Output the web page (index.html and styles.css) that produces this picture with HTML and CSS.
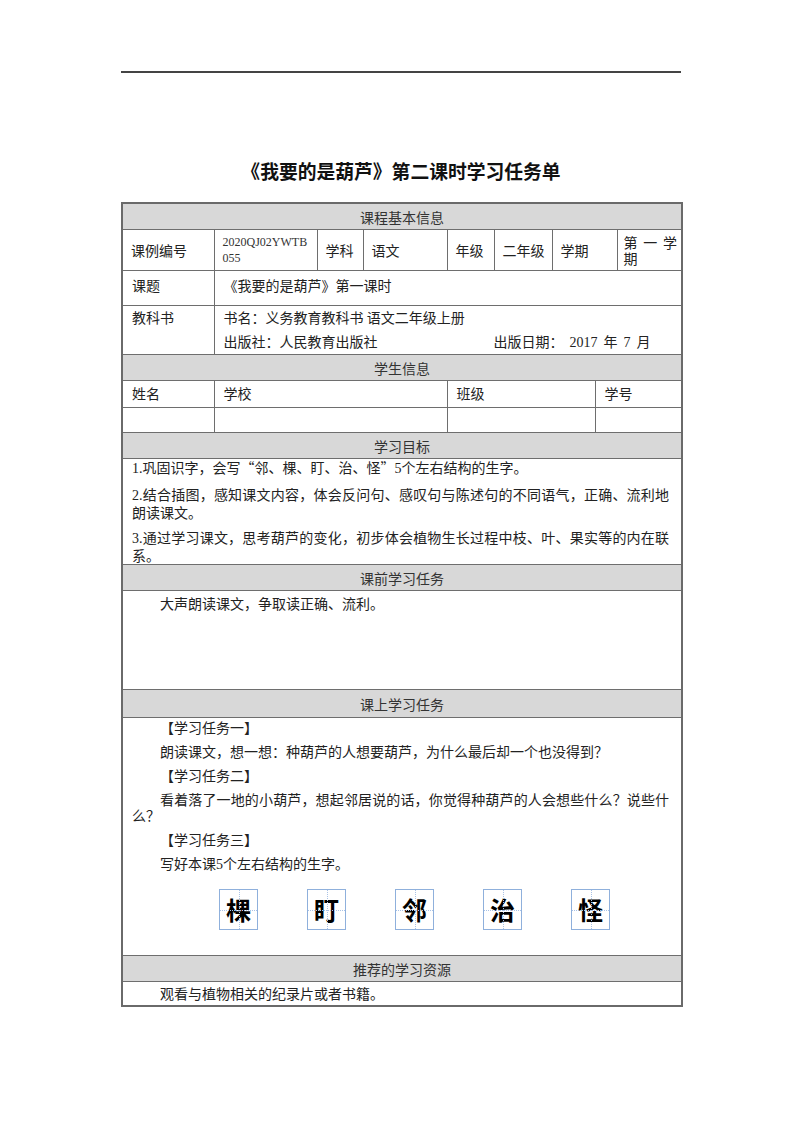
FILE: index.html
```html
<!DOCTYPE html>
<html lang="zh-CN">
<head>
<meta charset="utf-8">
<title>《我要的是葫芦》第二课时学习任务单</title>
<link rel="stylesheet" href="styles.css">
</head>
<body>
<div class="page">
  <div class="top-rule"></div>
  <h1 class="title">《我要的是葫芦》第二课时学习任务单</h1>
  <table class="sheet">
    <colgroup>
      <col class="c1"><col class="c2"><col class="c3"><col class="c4"><col class="c5"><col class="c6"><col class="c7"><col class="c8"><col class="c9">
    </colgroup>
    <tr class="head"><td colspan="9">课程基本信息</td></tr>
    <tr class="r-info">
      <td>课例编号</td>
      <td class="code">2020QJ02YWTB055</td>
      <td>学科</td>
      <td>语文</td>
      <td>年级</td>
      <td>二年级</td>
      <td colspan="2">学期</td>
      <td class="term">第一学期</td>
    </tr>
    <tr class="r-topic">
      <td>课题</td>
      <td colspan="8">《我要的是葫芦》第一课时</td>
    </tr>
    <tr class="r-book">
      <td>教科书</td>
      <td colspan="8">
        <p class="line">书名：义务教育教科书 语文二年级上册</p>
        <p class="line pub"><span class="pub-name">出版社：人民教育出版社</span><span>出版日期：<span class="lat gap">2017</span>年<span class="lat gap">7</span>月</span></p>
      </td>
    </tr>
    <tr class="head"><td colspan="9">学生信息</td></tr>
    <tr class="r-stu">
      <td>姓名</td>
      <td colspan="3">学校</td>
      <td colspan="3">班级</td>
      <td colspan="2">学号</td>
    </tr>
    <tr class="r-blank">
      <td></td><td colspan="3"></td><td colspan="3"></td><td colspan="2"></td>
    </tr>
    <tr class="head"><td colspan="9">学习目标</td></tr>
    <tr class="r-goal">
      <td colspan="9" class="text">
        <p><span class="lat">1.</span>巩固识字，会写“邻、棵、盯、治、怪”<span class="lat">5</span>个左右结构的生字。</p>
        <p><span class="lat">2.</span>结合插图，感知课文内容，体会反问句、感叹句与陈述句的不同语气，正确、流利地朗读课文。</p>
        <p><span class="lat">3.</span>通过学习课文，思考葫芦的变化，初步体会植物生长过程中枝、叶、果实等的内在联系。</p>
      </td>
    </tr>
    <tr class="head"><td colspan="9">课前学习任务</td></tr>
    <tr class="r-pre">
      <td colspan="9" class="text">
        <p class="ind">大声朗读课文，争取读正确、流利。</p>
      </td>
    </tr>
    <tr class="head head-tall"><td colspan="9">课上学习任务</td></tr>
    <tr class="r-class">
      <td colspan="9" class="text">
        <p class="ind">【学习任务一】</p>
        <p class="ind">朗读课文，想一想：种葫芦的人想要葫芦，为什么最后却一个也没得到？</p>
        <p class="ind">【学习任务二】</p>
        <p class="ind">看着落了一地的小葫芦，想起邻居说的话，你觉得种葫芦的人会想些什么？说些什么？</p>
        <p class="ind">【学习任务三】</p>
        <p class="ind">写好本课<span class="lat">5</span>个左右结构的生字。</p>
        <div class="grids">
          <span class="grid">棵</span>
          <span class="grid">盯</span>
          <span class="grid">邻</span>
          <span class="grid">治</span>
          <span class="grid">怪</span>
        </div>
      </td>
    </tr>
    <tr class="head"><td colspan="9">推荐的学习资源</td></tr>
    <tr class="r-res">
      <td colspan="9" class="text">
        <p class="ind">观看与植物相关的纪录片或者书籍。</p>
      </td>
    </tr>
  </table>
</div>
</body>
</html>
```

FILE: styles.css
```css
html, body {
  margin: 0;
  padding: 0;
  background: #ffffff;
}

body {
  font-family: "Noto Sans CJK SC", "Noto Sans CJK JP", sans-serif;
  color: #222222;
  font-size: 14px;
}

.page {
  width: 560px;
  margin-left: 121px;
  padding-top: 71px;
}

.top-rule {
  height: 0;
  border-top: 2px solid #444444;
}

.title {
  margin: 84px 0 0;
  height: 28px;
  line-height: 28px;
  font-size: 18.8px;
  font-weight: 700;
  text-align: center;
  color: #111111;
}

.sheet {
  margin-top: 17px;
  width: 560px;
  table-layout: fixed;
  border-collapse: collapse;
  border: 2px solid #6a6a6a;
}

.c1 { width: 92px; }
.c2 { width: 103px; }
.c3 { width: 46px; }
.c4 { width: 84px; }
.c5 { width: 47px; }
.c6 { width: 58px; }
.c7 { width: 43px; }
.c8 { width: 22px; }
.c9 { width: 65px; }

.sheet td {
  border: 1px solid #6e6e6e;
  padding: 0 8px 0 9px;
  vertical-align: top;
  line-height: 16px;
  font-size: 14px;
}

.sheet p {
  margin: 0;
}

.lat {
  font-family: "Liberation Serif", serif;
}

.gap {
  margin: 0 6px;
}

.head td {
  background: #d8d8d8;
  text-align: center;
  vertical-align: middle;
  height: 25px;
  padding: 0;
  color: #333333;
}

.head-tall td {
  height: 27px;
}

.r-info td {
  height: 40px;
  vertical-align: middle;
  padding: 0 5px 0 8px;
}

.r-info .code {
  font-family: "Liberation Serif", serif;
  font-size: 12px;
  word-break: break-all;
  color: #333333;
  padding-right: 4px;
}

.r-info .term {
  text-align: justify;
  text-align-last: left;
  padding: 0 4px 0 6px;
}

.r-topic td {
  height: 28px;
  padding-top: 6px;
}

.r-book td {
  height: 45px;
  padding-top: 3px;
}

.r-book .line + .line {
  margin-top: 8px;
}

.pub {
  display: flex;
}

.pub-name {
  width: 270px;
}

.r-stu td {
  height: 22px;
  padding-top: 4px;
}

.r-blank td {
  height: 24px;
}

.text {
  text-align: justify;
  padding-right: 12px !important;
}

.r-goal td {
  height: 105px;
  padding-top: 0;
}

.r-goal p + p {
  margin-top: 9px;
}

.ind {
  text-indent: 2em;
}

.r-pre td {
  height: 94px;
  padding-top: 4px;
}

.r-class td {
  height: 236px;
  padding-top: 1px;
}

.r-class p + p {
  margin-top: 8px;
}

.grids {
  display: flex;
  gap: 49px;
  margin: 16px 0 0 87px;
}

.grid {
  position: relative;
  width: 37px;
  height: 39px;
  border: 1px solid #8fb0dc;
  display: flex;
  align-items: center;
  justify-content: center;
  font-size: 25px;
  font-weight: 700;
  color: #000000;
  line-height: 1;
}

.grid::before,
.grid::after {
  content: "";
  position: absolute;
  z-index: 0;
}

.grid::before {
  left: 50%;
  top: 0;
  bottom: 0;
  border-left: 1px dotted #a9c2e6;
}

.grid::after {
  top: 50%;
  left: 0;
  right: 0;
  border-top: 1px dotted #a9c2e6;
}

.r-res td {
  height: 20px;
  padding-top: 3px;
}
```
